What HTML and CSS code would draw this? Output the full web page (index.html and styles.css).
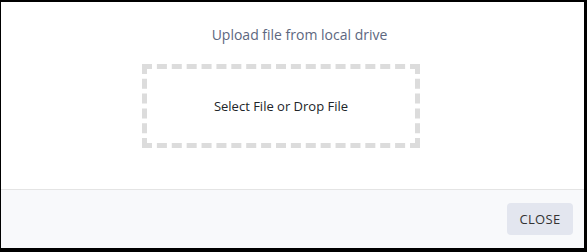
FILE: index.html
```html
<!DOCTYPE html>
<html lang="en">
<head>
    <meta charset="UTF-8">
    <title>Upload file</title>
    <link rel="stylesheet" href="styles.css">
</head>
<body>
<div class="modal">
    <div class="modal-body">
        <p class="hint">Upload file from local drive</p>
        <div class="drop-zone">Select File or Drop File</div>
    </div>
    <div class="modal-footer">
        <button type="button" class="btn-close">CLOSE</button>
    </div>
</div>
</body>
</html>
```

FILE: styles.css
```css
* {
    padding: 0;
    margin: 0;
    box-sizing: border-box;
}

body {
    background: #000;
    font-family: "Open Sans", "Liberation Sans", sans-serif;
    font-size: 13px;
}

.modal {
    height: 252px;
    border-style: solid;
    border-color: #000;
    border-width: 2px 3px 4px 1px;
    background: #fff;
    display: flex;
    flex-direction: column;
}

.modal-body {
    height: 187px;
    padding-top: 23px;
}

.hint {
    text-align: center;
    color: #5d6780;
    font-size: 14px;
    line-height: 20px;
    padding-left: 14px;
}

.drop-zone {
    width: 278px;
    height: 84px;
    margin: 19px 0 0 141px;
    border: 5px dashed #dcdcdc;
    display: flex;
    align-items: center;
    justify-content: center;
    color: #212529;
}

.modal-footer {
    flex: 1;
    border-top: 1px solid #e4e4e4;
    background: #f8f9fb;
    display: flex;
    align-items: center;
    justify-content: flex-end;
    padding-right: 11px;
}

.btn-close {
    width: 66px;
    height: 32px;
    border: none;
    border-radius: 4px;
    background: #e3e6ef;
    color: #333;
    font-family: inherit;
    font-size: 13px;
    letter-spacing: 0.3px;
}
```
